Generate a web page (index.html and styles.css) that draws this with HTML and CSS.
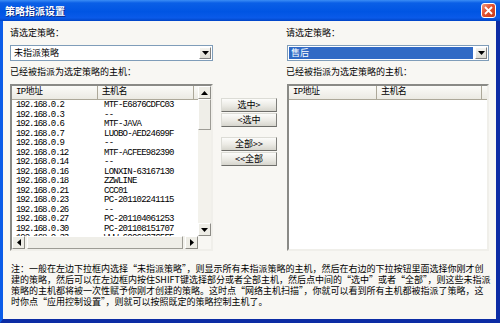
FILE: index.html
```html
<!DOCTYPE html>
<html lang="zh-CN">
<head>
    <meta charset="UTF-8">
    <title>策略指派设置</title>
    <link rel="stylesheet" href="styles.css">
</head>
<body>
    <div class="window">
        <div class="titlebar">
            <span class="title">策略指派设置</span>
            <span class="close">
                <svg width="9" height="9" viewBox="0 0 9 9"><path d="M1 1L8 8M8 1L1 8" stroke="#fff" stroke-width="1.8" fill="none"/></svg>
            </span>
        </div>
        <div class="client">
            <div class="panes">
                <div class="pane left">
                    <div class="label">请选定策略：</div>
                    <div class="combo">
                        <span class="combo-text">未指派策略</span>
                        <span class="combo-btn"><svg width="7" height="4" viewBox="0 0 7 4"><path d="M0 0H7L3.5 4Z" fill="#000"/></svg></span>
                    </div>
                    <div class="label">已经被指派为选定策略的主机：</div>
                    <div class="listview">
                        <div class="lv-body">
                            <div class="lv-header">
                                <span class="col-ip">IP地址</span>
                                <span class="col-host">主机名</span>
                                <span class="col-rest"></span>
                            </div>
                            <div class="row"><span class="ip">192.168.0.2</span><span class="host">MTF-E6876CDFC03</span></div>
                            <div class="row"><span class="ip">192.168.0.3</span><span class="host">--</span></div>
                            <div class="row"><span class="ip">192.168.0.6</span><span class="host">MTF-JAVA</span></div>
                            <div class="row"><span class="ip">192.168.0.7</span><span class="host">LUOBO-AED24699F</span></div>
                            <div class="row"><span class="ip">192.168.0.9</span><span class="host">--</span></div>
                            <div class="row"><span class="ip">192.168.0.12</span><span class="host">MTF-ACFEE982390</span></div>
                            <div class="row"><span class="ip">192.168.0.14</span><span class="host">--</span></div>
                            <div class="row"><span class="ip">192.168.0.16</span><span class="host">LONXIN-63167130</span></div>
                            <div class="row"><span class="ip">192.168.0.18</span><span class="host">ZZWLINE</span></div>
                            <div class="row"><span class="ip">192.168.0.21</span><span class="host">CCC01</span></div>
                            <div class="row"><span class="ip">192.168.0.23</span><span class="host">PC-201102241115</span></div>
                            <div class="row"><span class="ip">192.168.0.26</span><span class="host">--</span></div>
                            <div class="row"><span class="ip">192.168.0.27</span><span class="host">PC-201104061253</span></div>
                            <div class="row"><span class="ip">192.168.0.30</span><span class="host">PC-201108151707</span></div>
                            <div class="row"><span class="ip">192.168.0.33</span><span class="host">WWW-60068C7C5FE</span></div>
                        </div>
                        <div class="vscroll">
                            <span class="sb-btn"><svg width="7" height="4" viewBox="0 0 7 4"><path d="M0 4H7L3.5 0Z" fill="#000"/></svg></span>
                            <span class="sb-thumb v"></span>
                            <span class="sb-track"></span>
                            <span class="sb-btn"><svg width="7" height="4" viewBox="0 0 7 4"><path d="M0 0H7L3.5 4Z" fill="#000"/></svg></span>
                        </div>
                        <div class="hscroll">
                            <span class="sb-btn"><svg width="4" height="7" viewBox="0 0 4 7"><path d="M4 0V7L0 3.5Z" fill="#000"/></svg></span>
                            <span class="sb-thumb h"></span>
                            <span class="sb-btn"><svg width="4" height="7" viewBox="0 0 4 7"><path d="M0 0V7L4 3.5Z" fill="#000"/></svg></span>
                        </div>
                        <div class="corner"></div>
                    </div>
                </div>

                <div class="pane middle">
                    <button class="btn">选中&gt;</button>
                    <button class="btn">&lt;选中</button>
                    <button class="btn group">全部&gt;&gt;</button>
                    <button class="btn">&lt;&lt;全部</button>
                </div>

                <div class="pane right">
                    <div class="label">请选定策略：</div>
                    <div class="combo">
                        <span class="combo-text selected">售后</span>
                        <span class="combo-btn"><svg width="7" height="4" viewBox="0 0 7 4"><path d="M0 0H7L3.5 4Z" fill="#000"/></svg></span>
                    </div>
                    <div class="label">已经被指派为选定策略的主机：</div>
                    <div class="listview empty">
                        <div class="lv-body">
                            <div class="lv-header">
                                <span class="col-ip">IP地址</span>
                                <span class="col-host">主机名</span>
                                <span class="col-rest"></span>
                            </div>
                        </div>
                    </div>
                </div>
            </div>

            <div class="note">
                <div>注：一般在左边下拉框内选择“未指派策略”，则显示所有未指派策略的主机，然后在右边的下拉按钮里面选择你刚才创</div>
                <div>建的策略，然后可以在左边框内按住SHIFT键选择部分或者全部主机，然后点中间的“选中”或者“全部”，则这些未指派</div>
                <div>策略的主机都将被一次性赋予你刚才创建的策略。这时点“网络主机扫描”，你就可以看到所有主机都被指派了策略，这</div>
                <div>时你点“应用控制设置”，则就可以按照既定的策略控制主机了。</div>
            </div>
        </div>
    </div>
</body>
</html>
```

FILE: styles.css
```css
*{
    margin: 0;
    padding: 0;
    box-sizing: border-box;
}
body{
    font-family: "Noto Sans CJK SC", sans-serif;
    font-size: 9px;
    color: #000;
    background: #fff;
}
.window{
    width: 500px;
    height: 323px;
    display: flex;
    flex-direction: column;
}
/* 标题栏 */
.titlebar{
    height: 21px;
    display: flex;
    align-items: center;
    justify-content: space-between;
    padding: 0 4px 0 5px;
    background: linear-gradient(#3b8df5, #0a5fe6 3px, #0055e3 55%, #0a5ae9 85%, #0044c6);
}
.title{
    color: #fff;
    font-size: 10px;
    font-weight: bold;
    text-shadow: 1px 1px 0 #0a2a86;
}
.close{
    width: 15px;
    height: 15px;
    display: flex;
    align-items: center;
    justify-content: center;
    border: 1px solid #fff;
    border-radius: 3px;
    background: linear-gradient(135deg, #f29a7e, #e2502f 45%, #c33b1c);
}
.client{
    flex: 1;
    display: flex;
    flex-direction: column;
    background: #f8f7f3;
    border-left: 3px solid #0b5ce8;
    border-right: 4px solid #0c2ca4;
    border-bottom: 4px solid #0c2ca4;
}
.panes{
    display: flex;
    gap: 8px;
    padding: 6px 0 0 7px;
}
.pane{
    display: flex;
    flex-direction: column;
}
.left{
    width: 203px;
}
.middle{
    width: 56px;
    padding-top: 71px;
}
.right{
    width: 205px;
}
.label{
    height: 12px;
    line-height: 12px;
}
.right .label{
    padding-left: 1px;
}
/* 下拉框 */
.combo{
    height: 16px;
    margin: 6px 0 5px;
    display: flex;
    align-items: center;
    padding: 1px;
    background: #fff;
    border: 1px solid #7f9db9;
}
.right .combo{
    margin-left: 2px;
    margin-right: 1px;
}
.combo-text{
    flex: 1;
    height: 12px;
    line-height: 12px;
    padding-left: 2px;
}
.combo-text.selected{
    background: #316ac5;
    color: #fff;
    margin-right: 2px;
}
.combo-btn{
    width: 12px;
    height: 12px;
    display: flex;
    align-items: center;
    justify-content: center;
    background: linear-gradient(#f6f5f0, #dddcd3);
    border: 1px solid;
    border-color: #fff #808080 #808080 #fff;
}
/* 列表 */
.listview{
    height: 167px;
    margin-top: 6px;
    display: grid;
    grid-template-columns: 1fr 13px;
    grid-template-rows: 1fr 13px;
    background: #fff;
    border: 2px solid;
    border-color: #8a8a86 #f0efea #f0efea #8a8a86;
    overflow: hidden;
}
.listview.empty{
    margin-left: 2px;
    margin-right: 1px;
    grid-template-columns: 1fr;
    grid-template-rows: 1fr;
}
.lv-body{
    overflow: hidden;
    font-family: "Liberation Mono", "Noto Sans CJK SC", monospace;
    font-size: 9px;
}
.lv-header{
    height: 14px;
    display: flex;
    line-height: 12px;
    background: linear-gradient(#fbfbf8, #ebeae3);
    border-bottom: 1px solid #aca899;
    margin-bottom: 1px;
}
.lv-header span{
    border-right: 1px solid #aca899;
    padding-left: 4px;
    letter-spacing: -0.6px;
}
.col-ip{
    width: 88px;
}
.col-host{
    width: 105px;
}
.col-rest{
    flex: 1;
    border-right: none !important;
}
.left .col-host{
    width: 99px;
}
.row{
    display: flex;
    height: 9.5px;
    line-height: 9.5px;
    letter-spacing: -1.05px;
    white-space: nowrap;
}
.ip{
    width: 92px;
    padding-left: 4px;
    flex-shrink: 0;
}
.host{
    letter-spacing: -0.75px;
}
/* 滚动条 */
.vscroll{
    display: flex;
    flex-direction: column;
    background: #f3f2ec;
}
.hscroll{
    display: flex;
    background: #f3f2ec;
}
.corner{
    background: #f8f7f3;
}
.sb-btn{
    width: 13px;
    height: 13px;
    flex-shrink: 0;
    display: flex;
    align-items: center;
    justify-content: center;
    background: #eeede6;
    border: 1px solid;
    border-color: #fff #8d8c86 #8d8c86 #fff;
}
.sb-thumb{
    background: #efeee8;
    border: 1px solid;
    border-color: #fff #9d9c95 #9d9c95 #fff;
}
.sb-thumb.v{
    height: 31px;
}
.sb-thumb.h{
    flex: 1;
    margin: 0 2px;
}
.sb-track{
    flex: 1;
}
/* 中间按钮 */
.btn{
    display: block;
    width: 56px;
    height: 14px;
    margin-top: 1px;
    font-family: "Noto Sans CJK SC", sans-serif;
    font-size: 9px;
    line-height: 12px;
    color: #000;
    background: linear-gradient(#fcfcfa, #ebeae4 55%, #d6d5cd);
    border: 1px solid;
    border-color: #dcdcd6 #7e7e7a #6e6e6a #dcdcd6;
}
.btn:first-child{
    margin-top: 0;
}
.btn.group{
    margin-top: 10px;
}
/* 注释 */
.note{
    margin: 12px 0 0 8px;
    line-height: 11px;
    white-space: nowrap;
}
```
